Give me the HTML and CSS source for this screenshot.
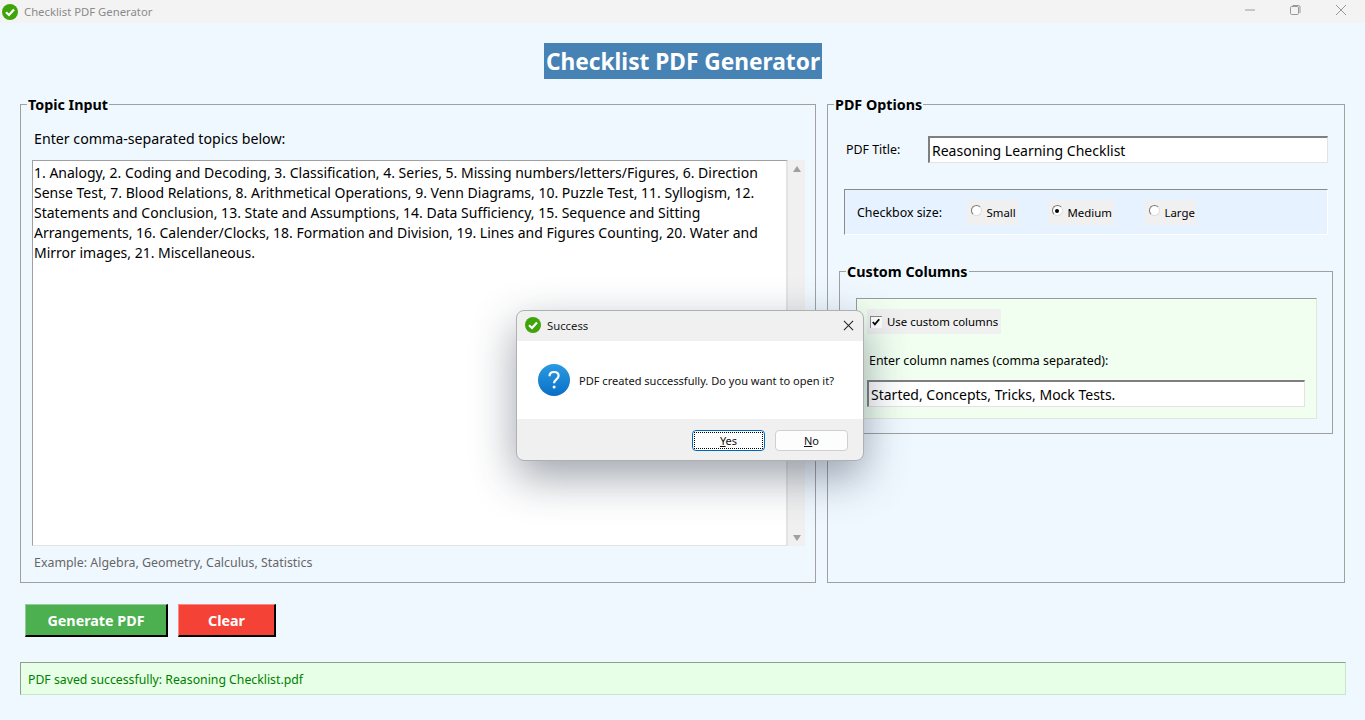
FILE: index.html
```html
<!DOCTYPE html>
<html lang="en">
<head>
<meta charset="utf-8">
<title>Checklist PDF Generator</title>
<link rel="stylesheet" href="styles.css">
</head>
<body>
<svg class="defs" width="0" height="0" aria-hidden="true">
  <symbol id="okicon" viewBox="0 0 16 16">
    <circle cx="8" cy="8" r="8" fill="#3fa40a"/>
    <path d="M4 8.200 7 11l5-5.600" fill="none" stroke="#fff" stroke-width="2.200"/>
  </symbol>
</svg>
<header class="titlebar">
  <svg class="appicon"><use href="#okicon"/></svg>
  <span class="titlebar-text">Checklist PDF Generator</span>
  <div class="winctl">
    <svg class="winbtn" viewBox="0 0 12 12"><path d="M2 6h10" stroke="#999" stroke-width="1" fill="none"/></svg>
    <svg class="winbtn" viewBox="0 0 12 12"><rect x="1.500" y="2.500" width="8" height="8" rx="1.200" stroke="#999" fill="none"/><path d="M3.500 1.500h6a1.500 1.500 0 0 1 1.500 1.500v6" stroke="#999" fill="none"/></svg>
    <svg class="winbtn" viewBox="0 0 12 12"><path d="M1 1l10 10M11 1 1 11" stroke="#999" stroke-width="1" fill="none"/></svg>
  </div>
</header>

<main class="app">
  <div class="heading-row"><h1 class="heading">Checklist PDF Generator</h1></div>

  <div class="columns">
    <section class="group topic">
      <h2 class="legend">Topic Input</h2>
      <p class="prompt">Enter comma-separated topics below:</p>
      <div class="editor">
        <div class="textarea">1. Analogy, 2. Coding and Decoding, 3. Classification, 4. Series, 5. Missing numbers/letters/Figures, 6. Direction<br>Sense Test, 7. Blood Relations, 8. Arithmetical Operations, 9. Venn Diagrams, 10. Puzzle Test, 11. Syllogism, 12.<br>Statements and Conclusion, 13. State and Assumptions, 14. Data Sufficiency, 15. Sequence and Sitting<br>Arrangements, 16. Calender/Clocks, 18. Formation and Division, 19. Lines and Figures Counting, 20. Water and<br>Mirror images, 21. Miscellaneous.</div>
        <div class="scrollbar"><span class="arrow-up"></span><span class="arrow-down"></span></div>
      </div>
      <p class="example">Example: Algebra, Geometry, Calculus, Statistics</p>
    </section>

    <section class="group options">
      <h2 class="legend legend-options">PDF Options</h2>
      <div class="title-row">
        <span class="small-label title-label">PDF Title:</span>
        <div class="entry entry-title">Reasoning Learning Checklist</div>
      </div>
      <div class="size-frame">
        <span class="small-label size-label">Checkbox size:</span>
        <span class="radio radio-small"><i class="dot"></i>Small</span>
        <span class="radio radio-medium"><i class="dot on"></i>Medium</span>
        <span class="radio radio-large"><i class="dot"></i>Large</span>
      </div>
      <section class="group custom">
        <h2 class="legend">Custom Columns</h2>
        <div class="green">
          <div class="check-row">
            <svg class="checkbox" viewBox="0 0 13 13"><rect width="13" height="13" fill="#808080"/><rect x="1" y="1" width="12" height="12" fill="#fff"/><path d="M3 6.500 5.300 9 10 3.500" fill="none" stroke="#000" stroke-width="2"/></svg>
            <span>Use custom columns</span>
          </div>
          <p class="small-label col-label">Enter column names (comma separated):</p>
          <div class="entry entry-cols">Started, Concepts, Tricks, Mock Tests.</div>
        </div>
      </section>
    </section>
  </div>

  <div class="actions">
    <button class="btn btn-green">Generate PDF</button>
    <button class="btn btn-red">Clear</button>
  </div>

  <div class="status">PDF saved successfully: Reasoning Checklist.pdf</div>
</main>

<div class="dialog" role="dialog">
  <div class="dlg-title">
    <svg class="dlg-icon"><use href="#okicon"/></svg>
    <span class="dlg-title-text">Success</span>
    <svg class="dlg-close" viewBox="0 0 12 12"><path d="M1 1l10 10M11 1 1 11" stroke="#222" stroke-width="1.100" fill="none"/></svg>
  </div>
  <div class="dlg-body">
    <svg class="dlg-q" viewBox="0 0 32 32">
      <defs><linearGradient id="qg" x1="0" y1="0" x2="0" y2="1"><stop offset="0" stop-color="#2a9be2"/><stop offset="1" stop-color="#0a6fc6"/></linearGradient></defs>
      <circle cx="16" cy="16" r="16" fill="url(#qg)"/>
      <path d="M11.500 12.200c0-2.700 2-4.200 4.600-4.200s4.500 1.500 4.500 3.800c0 3.600-4.500 3.600-4.500 7.400" fill="none" stroke="#fff" stroke-width="2.200"/>
      <circle cx="16.100" cy="23" r="1.500" fill="#fff"/>
    </svg>
    <span class="dlg-msg">PDF created successfully. Do you want to open it?</span>
  </div>
  <div class="dlg-foot">
    <button class="dlg-btn dlg-default"><span class="focus"><u>Y</u>es</span></button>
    <button class="dlg-btn"><u>N</u>o</button>
  </div>
</div>
</body>
</html>
```
FILE: styles.css
```css
* { box-sizing: border-box; }
html, body { margin: 0; height: 720px; overflow: hidden; }
body {
  background: #f0f8ff;
  color: #000;
  font-family: "Noto Sans", "Open Sans", sans-serif;
  font-size: 14px;
  position: relative;
}
.defs { position: absolute; }
p, h1, h2 { margin: 0; font-weight: normal; }

.titlebar {
  height: 23px;
  background: #f3f3f3;
  display: flex;
  align-items: center;
  padding-left: 2px;
}
.appicon { width: 16px; height: 16px; }
.titlebar-text { margin-left: 6px; font-size: 11.300px; color: #8a8a8a; }
.winctl { margin-left: auto; display: flex; gap: 34px; margin-right: 18px; margin-bottom: 3px; }
.winbtn { width: 12px; height: 12px; display: block; }

.app { padding: 20px 19px 0 20px; }
.heading-row { display: flex; justify-content: center; height: 36px; }
.heading {
  background: #4682b4;
  color: #fff;
  font-size: 22.700px;
  font-weight: 700;
  height: 36px;
  line-height: 38px;
  padding: 0 2px;
  white-space: nowrap;
}

.columns {
  display: grid;
  grid-template-columns: 796px 518px;
  gap: 11px;
  margin-top: 25px;
}
.group { border: 1px solid #a0a0a0; }
.legend {
  font-size: 14.300px;
  font-weight: 700;
  line-height: 20px;
  width: fit-content;
  background: #f0f8ff;
  margin: -10px 0 -2px 6px;
  padding: 0 1px;
}
.legend-options { margin-left: -5px; }
.topic { height: 479px; }
.prompt { margin: 16px 0 0 13px; font-size: 14.200px; line-height: 20px; }
.editor { display: flex; margin: 11px 10px 0 11px; height: 386px; }
.textarea {
  width: 756px;
  background: #fff;
  border-top: 1px solid #a0a0a0;
  border-left: 1px solid #a0a0a0;
  border-right: 2px solid #e3e3e3;
  border-bottom: 1px solid #e3e3e3;
  padding: 2px 0 0 1px;
  line-height: 20px;
  white-space: nowrap;
}
.scrollbar {
  width: 17px;
  background: #f0f0f0;
  display: flex;
  flex-direction: column;
  justify-content: space-between;
  align-items: center;
  padding: 6px 0 5px;
}
.arrow-up, .arrow-down { width: 0; height: 0; border-left: 4px solid transparent; border-right: 4px solid transparent; }
.arrow-up { border-bottom: 6px solid #a0a0a0; }
.arrow-down { border-top: 6px solid #a0a0a0; }
.example { margin: 8px 0 0 13px; font-size: 12.400px; line-height: 18px; color: #666; }

.options { height: 479px; padding: 0 11px 0 11px; }
.small-label { font-size: 12.400px; }
.title-row { display: flex; align-items: center; margin: 23px 5px 0 7px; height: 27px; }
.title-label { width: 82px; flex: none; }
.entry {
  background: #fff;
  height: 27px;
  border-top: 2px solid #7f7f7f;
  border-left: 2px solid #7f7f7f;
  border-right: 1px solid #e3e3e3;
  border-bottom: 1px solid #e3e3e3;
  padding-left: 2px;
  line-height: 25px;
  white-space: nowrap;
}
.entry-title { width: 400px; }
.size-frame {
  display: flex;
  align-items: center;
  height: 46px;
  margin: 26px 5px 0 5px;
  background: #e6f2ff;
  border-top: 1px solid #8a8a8a;
  border-left: 1px solid #8a8a8a;
  border-right: 1px solid #fff;
  border-bottom: 1px solid #fff;
  padding-left: 12px;
}
.size-label { width: 110px; flex: none; }
.radio {
  display: flex;
  align-items: center;
  height: 25px;
  background: #f0f0f0;
  font-size: 11.400px;
  padding-left: 3px;
}
.radio-small { width: 51px; }
.radio-medium { width: 66px; margin-left: 30px; }
.radio-large { width: 51px; margin-left: 31px; }
.dot {
  width: 11px; height: 11px;
  border-radius: 50%;
  background: #fff;
  border: 1px solid;
  border-color: #777 #ddd #ddd #777;
  margin: -3px 5px 0 0.500px;
  flex: none;
  position: relative;
}
.dot.on::after {
  content: "";
  position: absolute;
  left: 2.500px; top: 2.500px;
  width: 4px; height: 4px;
  border-radius: 50%;
  background: #000;
}

.custom { margin: 36px 0 0 0; height: 163px; width: 494px; }
.green {
  margin: 18px 15px 0 16px;
  height: 121px;
  background: #f0fff0;
  border-top: 1px solid #9a9a9a;
  border-left: 1px solid #9a9a9a;
  border-right: 1px solid #dfe8df;
  border-bottom: 1px solid #dfe8df;
  padding: 10px 11px 0 10px;
}
.check-row {
  display: flex;
  align-items: center;
  width: 134px;
  height: 25px;
  background: #f0f0f0;
  font-size: 11.400px;
  white-space: nowrap;
  padding-left: 3px;
}
.checkbox { width: 12px; height: 12px; margin-right: 5px; flex: none; }
.col-label { margin: 17px 0 0 2px; line-height: 20px; }
.entry-cols { width: 438px; margin-top: 9px; }

.actions { display: flex; gap: 10px; margin: 21px 0 0 5px; }
.btn {
  height: 33px;
  border: 1px solid;
  border-width: 1px 2px 2px 1px;
  color: #fff;
  font: 700 14.300px "Noto Sans", "Open Sans", sans-serif;
  padding: 0;
}
.btn-green { width: 143px; background: #4caf50; border-color: #8fd092 #000 #000 #8fd092; }
.btn-red { width: 98px; background: #f44336; border-color: #f98a82 #000 #000 #f98a82; }

.status {
  margin-top: 25px;
  height: 33px;
  background: #e6ffe6;
  border-top: 1px solid #8fa08f;
  border-left: 1px solid #8fa08f;
  border-right: 1px solid #c9e6c9;
  border-bottom: 1px solid #c9e6c9;
  color: #008000;
  font-size: 12.270px;
  line-height: 33px;
  padding-left: 7px;
}

.dialog {
  position: absolute;
  left: 516px; top: 310px;
  width: 348px; height: 151px;
  border-radius: 8px;
  overflow: hidden;
  background: #f0f0f0;
  border: 1px solid #b0b0b0;
  box-shadow: 0 16px 44px rgba(40, 50, 70, .45);
  display: flex;
  flex-direction: column;
}
.dlg-title { height: 30px; display: flex; align-items: center; padding: 0 0 2px 8px; flex: none; }
.dlg-icon { width: 16px; height: 16px; }
.dlg-title-text { margin-left: 6px; font-size: 11.300px; color: #222; }
.dlg-close { width: 11px; height: 11px; margin-left: auto; margin-right: 9px; }
.dlg-body {
  height: 78px;
  background: #fff;
  display: flex;
  align-items: center;
  padding-left: 21px;
  flex: none;
}
.dlg-q { width: 32px; height: 32px; }
.dlg-msg { margin-left: 9px; font-size: 11.050px; color: #111; white-space: nowrap; }
.dlg-foot {
  flex: 1;
  display: flex;
  justify-content: flex-end;
  gap: 10px;
  align-items: flex-start;
  padding: 11px 15px 0 0;
}
.dlg-btn {
  width: 73px;
  height: 21px;
  background: #fdfdfd;
  border: 1px solid #cfcfcf;
  border-radius: 4px;
  font: 11px "Noto Sans", "Open Sans", sans-serif;
  color: #111;
  padding: 0;
}
.dlg-default { border: 1px solid #0067c0; padding: 1px; }
.focus {
  display: block;
  height: 100%;
  line-height: 15px;
  border: 1px dotted #000;
}
```
